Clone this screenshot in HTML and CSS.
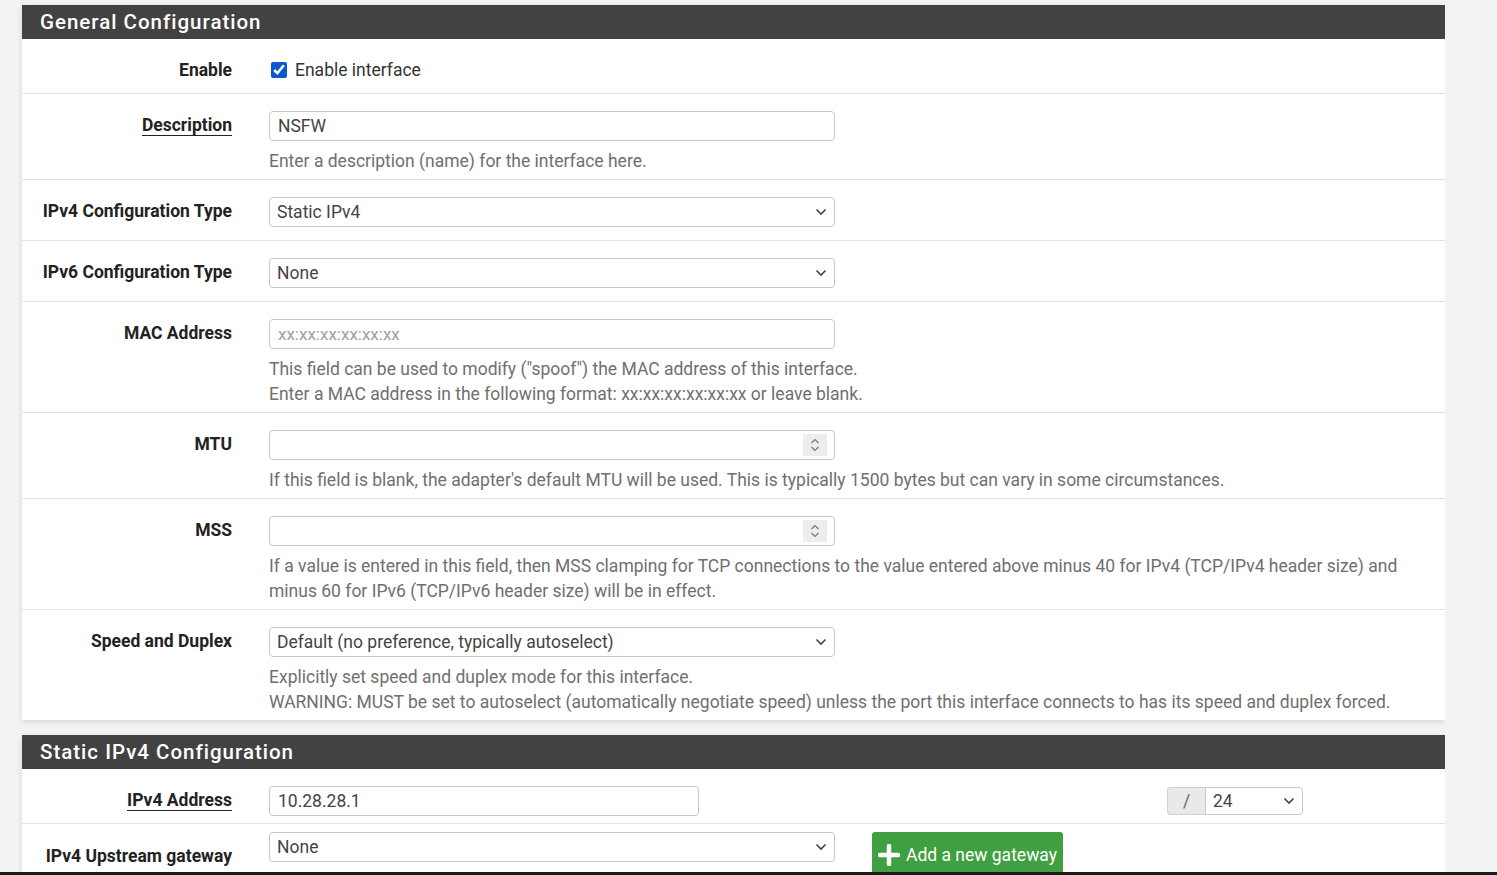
FILE: index.html
```html
<!DOCTYPE html>
<html>
<head>
<meta charset="utf-8">
<link rel="stylesheet" href="styles.css">
</head>
<body>
<div class="page">
  <div class="content">
    <section class="panel">
      <div class="panel-heading">General Configuration</div>
      <div class="row">
        <div class="label">Enable</div>
        <div class="field">
          <label class="check"><input type="checkbox" checked> Enable interface</label>
        </div>
      </div>
      <div class="row">
        <div class="label"><span class="ul">Description</span></div>
        <div class="field">
          <input class="ctl" type="text" value="NSFW">
          <div class="help">Enter a description (name) for the interface here.</div>
        </div>
      </div>
      <div class="row">
        <div class="label">IPv4 Configuration Type</div>
        <div class="field">
          <select class="ctl"><option>Static IPv4</option></select>
        </div>
      </div>
      <div class="row">
        <div class="label">IPv6 Configuration Type</div>
        <div class="field">
          <select class="ctl"><option>None</option></select>
        </div>
      </div>
      <div class="row">
        <div class="label">MAC Address</div>
        <div class="field">
          <input class="ctl" type="text" placeholder="xx:xx:xx:xx:xx:xx">
          <div class="help">This field can be used to modify ("spoof") the MAC address of this interface.<br>Enter a MAC address in the following format: xx:xx:xx:xx:xx:xx or leave blank.</div>
        </div>
      </div>
      <div class="row">
        <div class="label">MTU</div>
        <div class="field">
          <div class="num">
            <input class="ctl" type="text">
            <span class="spin"><svg width="10" height="16" viewBox="0 0 10 16"><path d="M1.5 6 L5 2.5 L8.5 6 M1.5 10 L5 13.5 L8.5 10" fill="none" stroke="#777" stroke-width="1.2"/></svg></span>
          </div>
          <div class="help">If this field is blank, the adapter's default MTU will be used. This is typically 1500 bytes but can vary in some circumstances.</div>
        </div>
      </div>
      <div class="row">
        <div class="label">MSS</div>
        <div class="field">
          <div class="num">
            <input class="ctl" type="text">
            <span class="spin"><svg width="10" height="16" viewBox="0 0 10 16"><path d="M1.5 6 L5 2.5 L8.5 6 M1.5 10 L5 13.5 L8.5 10" fill="none" stroke="#777" stroke-width="1.2"/></svg></span>
          </div>
          <div class="help">If a value is entered in this field, then MSS clamping for TCP connections to the value entered above minus 40 for IPv4 (TCP/IPv4 header size) and minus 60 for IPv6 (TCP/IPv6 header size) will be in effect.</div>
        </div>
      </div>
      <div class="row last">
        <div class="label">Speed and Duplex</div>
        <div class="field">
          <select class="ctl"><option>Default (no preference, typically autoselect)</option></select>
          <div class="help">Explicitly set speed and duplex mode for this interface.<br>WARNING: MUST be set to autoselect (automatically negotiate speed) unless the port this interface connects to has its speed and duplex forced.</div>
        </div>
      </div>
    </section>

    <section class="panel">
      <div class="panel-heading">Static IPv4 Configuration</div>
      <div class="row addr-row">
        <div class="label"><span class="ul">IPv4 Address</span></div>
        <div class="field addr">
          <input class="ctl addr-input" type="text" value="10.28.28.1">
          <div class="cidr">
            <span class="addon">/</span>
            <select class="ctl cidr-sel"><option>24</option></select>
          </div>
        </div>
      </div>
      <div class="row gw-row">
        <div class="label gw-label">IPv4 Upstream gateway</div>
        <div class="field gw">
          <select class="ctl"><option>None</option></select>
          <button class="btn-add"><svg width="22" height="22" viewBox="0 0 22 22"><path d="M11 2 V20 M2 11 H20" stroke="#fff" stroke-width="4.5" stroke-linecap="round"/></svg>Add a new gateway</button>
        </div>
      </div>
    </section>
  </div>
  <div class="bottom-bar"></div>
</div>
</body>
</html>
```

FILE: styles.css
```css
* { box-sizing: border-box; }
html, body { margin: 0; padding: 0; }
body {
  background: #f3f3f3;
  font-family: Roboto, "Liberation Sans", sans-serif;
  font-size: 17.5px;
  color: #555;
}
.page {
  height: 875px;
  display: flex;
  flex-direction: column;
  overflow: hidden;
}
.content {
  flex: 1;
  overflow: hidden;
  padding: 5px 0 0 22px;
  width: 1445px;
}
.bottom-bar {
  height: 3px;
  background: #1d1a1f;
  flex: none;
}
.panel {
  background: #fff;
  box-shadow: 0 2px 6px rgba(0,0,0,0.12);
  margin-bottom: 15px;
}
.panel-heading {
  height: 34px;
  background: #424242;
  color: #fff;
  font-size: 20.5px;
  font-weight: 500;
  letter-spacing: 1px;
  line-height: 35px;
  padding-left: 18px;
}
.row {
  display: grid;
  grid-template-columns: 210px 1fr;
  column-gap: 37px;
  padding: 17px 0 5px;
  border-bottom: 1px solid #e3e3e3;
}
.row.last { border-bottom: none; }
.label {
  text-align: right;
  font-weight: 700;
  color: #222;
  line-height: 25px;
  padding-top: 2px;
}
.ul {
  border-bottom: 1.5px solid #222;
  padding-bottom: 0;
}
.field { display: flex; flex-direction: column; align-items: flex-start; }
.check {
  display: flex;
  align-items: center;
  gap: 8px;
  line-height: 24px;
  height: 24px;
  margin-top: 2px;
  margin-bottom: 6px;
  color: #333;
}
.check input {
  width: 16px;
  height: 16px;
  margin: 0 0 0 2px;
  accent-color: #0b57d0;
}
.ctl {
  width: 566px;
  height: 30px;
  border: 1px solid #c8c8c8;
  border-radius: 4px;
  font-family: Roboto, "Liberation Sans", sans-serif;
  font-size: 17.5px;
  color: #444;
  padding: 0 8px;
  margin: 0 0 8px;
  background: #fff;
  outline: none;
}
.ctl::placeholder { color: #a0a0a0; font-size: 17px; }
select.ctl {
  appearance: none;
  -webkit-appearance: none;
  background: #fff url("data:image/svg+xml;utf8,<svg xmlns='http://www.w3.org/2000/svg' width='12' height='8' viewBox='0 0 12 8'><path d='M1.5 1.5 L6 6 L10.5 1.5' fill='none' stroke='%23444' stroke-width='1.6'/></svg>") no-repeat right 7px center;
  padding-left: 7px;
}
.help {
  line-height: 25px;
  color: #6f6f6f;
}
.num { position: relative; }
.spin {
  position: absolute;
  right: 8px;
  top: 4px;
  width: 24px;
  height: 22px;
  background: #ededed;
  display: flex;
  align-items: center;
  justify-content: center;
}
.addr-row { padding-bottom: 7px; }
.addr-row .ctl { margin-bottom: 0; }
.addr { flex-direction: row; align-items: flex-start; }
.addr-input { width: 430px; }
.cidr { display: flex; margin-left: 468px; margin-top: 1px; }
.addon {
  width: 38px;
  height: 28px;
  background: #e9e9e9;
  border: 1px solid #cfcfcf;
  border-right: none;
  border-radius: 4px 0 0 4px;
  display: flex;
  align-items: center;
  justify-content: center;
  color: #666;
}
.cidr-sel {
  width: 98px;
  height: 28px;
  border-radius: 0 4px 4px 0;
  padding-left: 8px;
}
.gw-row { padding-top: 8px; border-bottom: none; }
.gw-label { padding-top: 12px; }
.gw { flex-direction: row; align-items: flex-start; gap: 37px; }
.btn-add {
  display: flex;
  align-items: center;
  gap: 6px;
  height: 46px;
  padding: 0 6px 0 6px;
  background: #3f9f41;
  border: none;
  border-radius: 3px;
  color: #fff;
  font-family: Roboto, "Liberation Sans", sans-serif;
  font-size: 17.5px;
  width: 191px;
}
```
